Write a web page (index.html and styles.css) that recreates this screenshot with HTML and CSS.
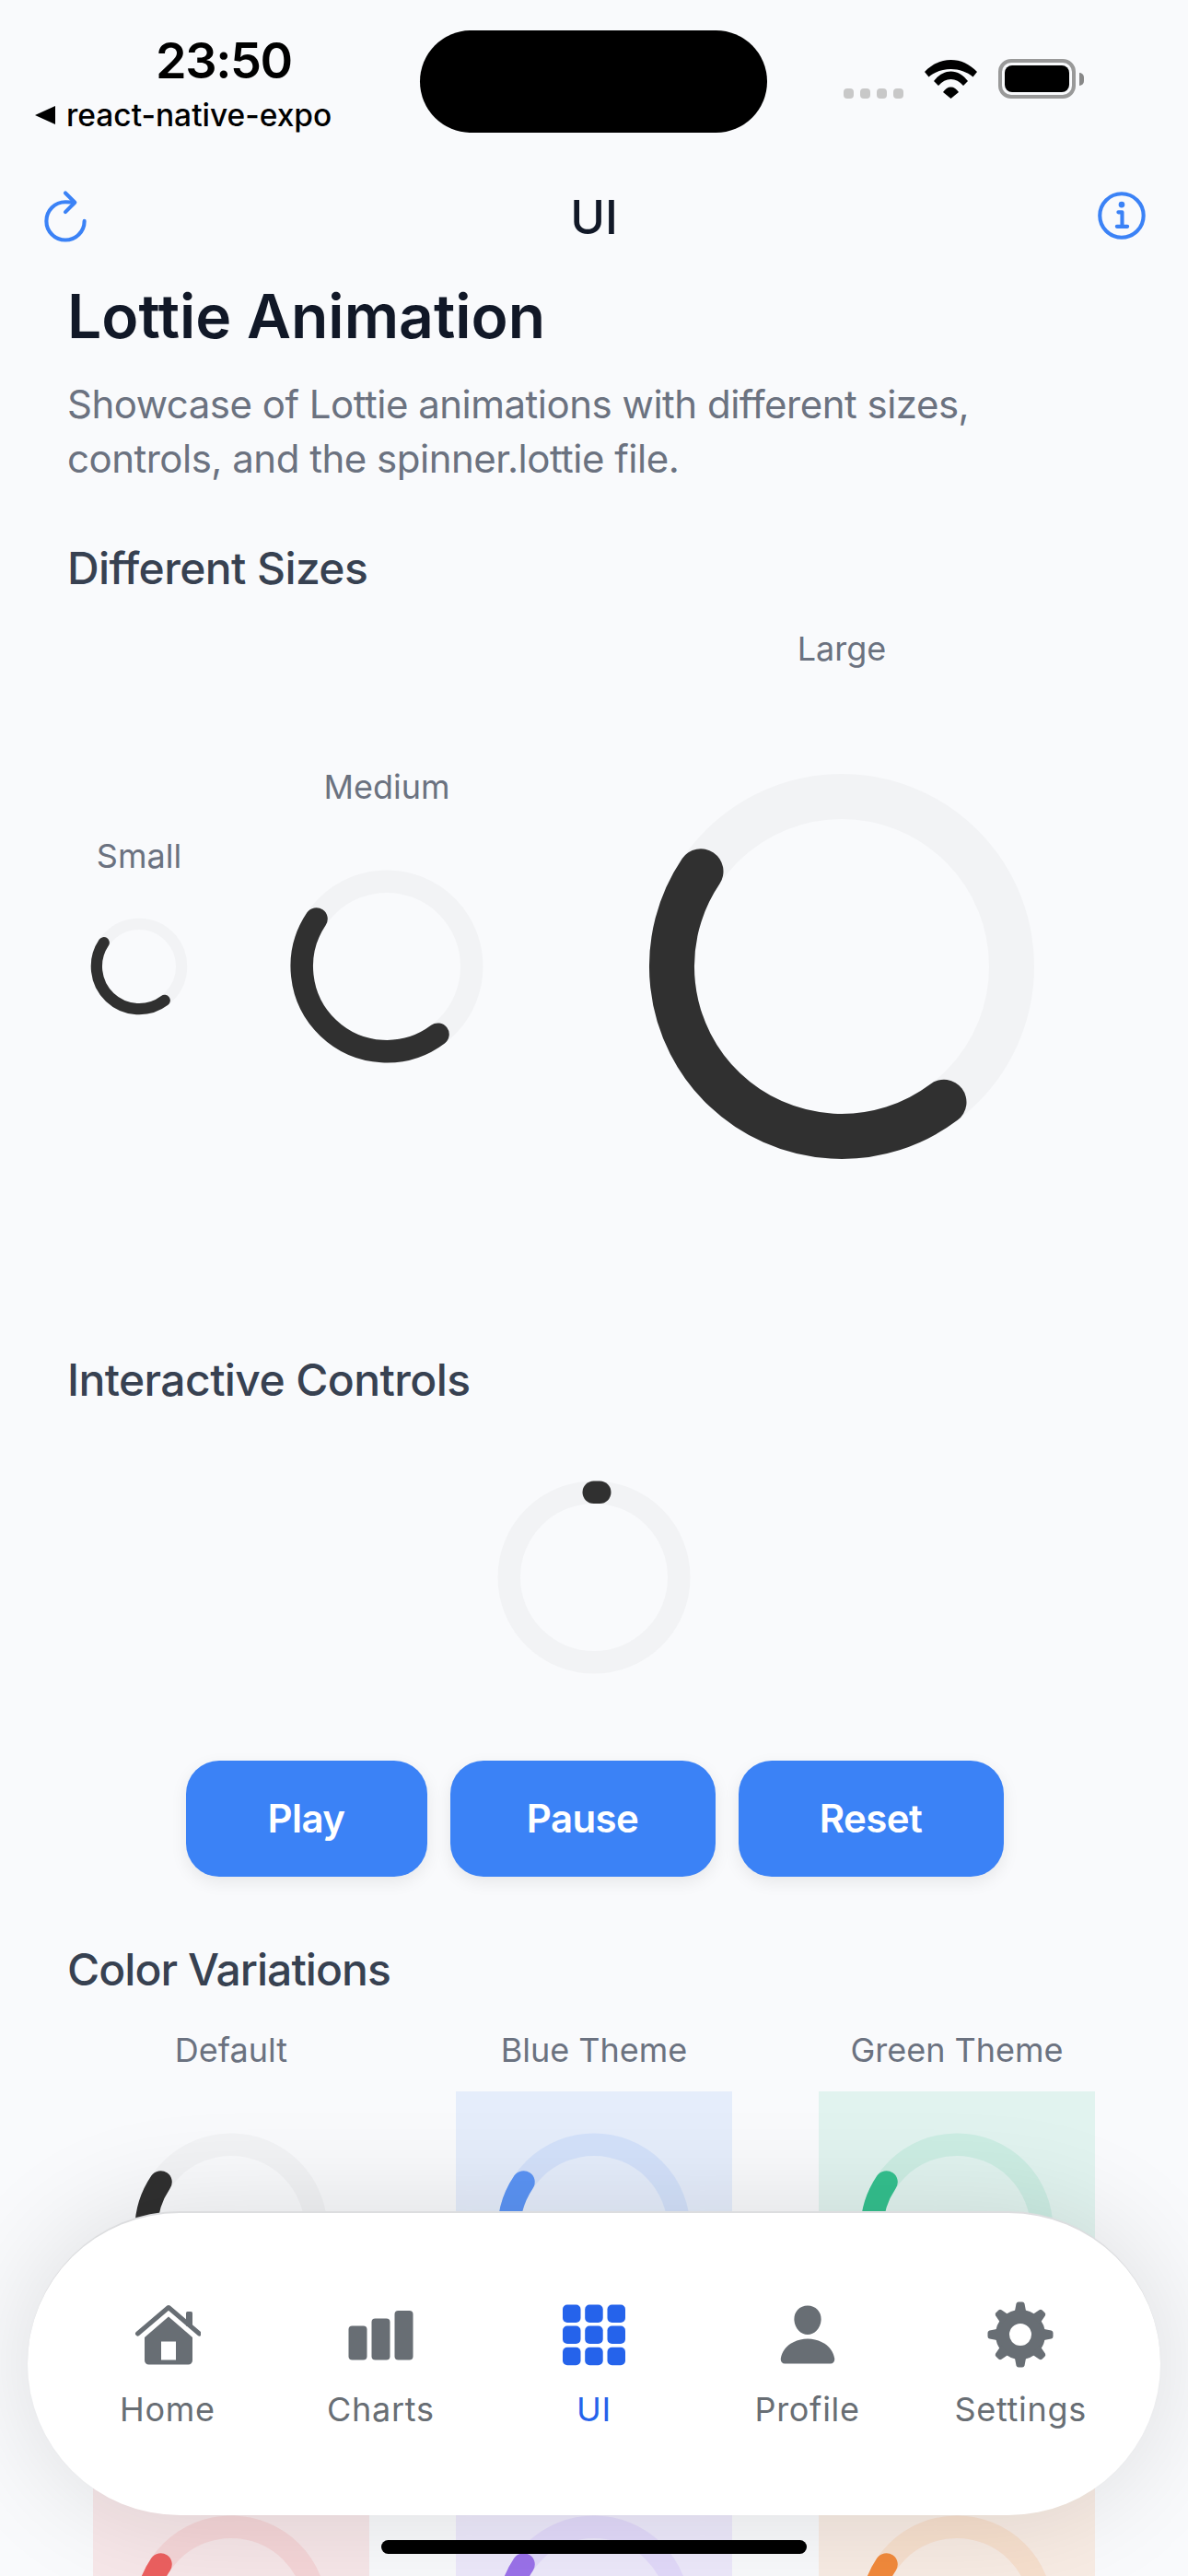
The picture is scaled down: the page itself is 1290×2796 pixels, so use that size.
FILE: index.html
```html
<!DOCTYPE html>
<html lang="en">
<head>
  <meta charset="UTF-8" />
  <title>Lottie Animation</title>
  <meta name="viewport" content="width=device-width, initial-scale=1.0" />
  <link rel="stylesheet" href="styles.css">
</head>
<body>
  <svg class="defs" width="0" height="0">
    <defs>
      <path id="spin-arc" d="M147 196.800A184.500 184.500 0 0 0 411 447.300" />
      <circle id="spin-ring" cx="300" cy="300" r="184.500" />
      <path id="gear-tooth" d="M29.500 13 L31.500 2.500 Q32 .5 34 .5 H38 Q40 .5 40.500 2.500 L42.500 13 Z" />
    </defs>
  </svg>

  <div class="screen">
    <div class="status-bar">
      <div class="status-left">
        <div class="time">23:50</div>
        <div class="back-app"><span class="back-arrow"></span>react-native-expo</div>
      </div>
      <div class="island"></div>
      <div class="status-right">
        <div class="signal"><span></span><span></span><span></span><span></span></div>
        <svg class="wifi" viewBox="0 0 57 42">
          <path d="M0 13C8 4.500 18 0 28.500 0S49 4.500 57 13L52.500 18.500C46 13 37.500 10 28.500 10S11 13 4.500 18.500Z" />
          <path d="M10 23C15 16.500 21.500 12.500 28.500 12.500S42 16.500 47 23L42 28C38 23.500 33.500 21 28.500 21S19 23.500 15 28Z" />
          <path d="M20 35C22.500 31.500 25 29.500 28.500 29.500S34.500 31.500 37 35L28.500 42Z" />
        </svg>
        <div class="battery"><div class="battery-level"></div></div>
        <div class="battery-cap"></div>
      </div>
    </div>

    <header class="nav-header">
      <svg class="nav-icon" viewBox="0 0 512 512">
        <path d="M320 146s24.360-12-64-12a160 160 0 10160 160" />
        <path d="M256 58l80 80-80 80" />
      </svg>
      <div class="nav-title">UI</div>
      <svg class="nav-icon" viewBox="0 0 512 512">
        <path d="M248 64C146.390 64 64 146.390 64 248s82.390 184 184 184 184-82.390 184-184S349.610 64 248 64z" />
        <path d="M220 220h32v116M208 340h88" />
        <circle class="nav-dot" cx="248" cy="156" r="26" />
      </svg>
    </header>

    <main class="content">
      <h1>Lottie Animation</h1>
      <p class="desc">Showcase of Lottie animations with different sizes, controls, and the spinner.lottie file.</p>

      <h2 class="section-sizes">Different Sizes</h2>
      <div class="sizes-row">
        <div class="size-item">
          <div class="caption">Small</div>
          <svg class="lottie lottie-sm" viewBox="0 0 600 600"><use class="ring" href="#spin-ring" /><use class="arc" href="#spin-arc" /></svg>
        </div>
        <div class="size-item">
          <div class="caption">Medium</div>
          <svg class="lottie" viewBox="0 0 600 600"><use class="ring" href="#spin-ring" /><use class="arc" href="#spin-arc" /></svg>
        </div>
        <div class="size-item">
          <div class="caption">Large</div>
          <svg class="lottie lottie-lg" viewBox="0 0 600 600"><use class="ring" href="#spin-ring" /><use class="arc" href="#spin-arc" /></svg>
        </div>
      </div>

      <h2 class="section-controls">Interactive Controls</h2>
      <div class="player">
        <svg class="lottie" viewBox="0 0 600 600"><use class="ring" href="#spin-ring" /><path class="arc" d="M299.500 115.500H312.500" /></svg>
      </div>
      <div class="buttons">
        <button class="btn btn-play">Play</button>
        <button class="btn">Pause</button>
        <button class="btn">Reset</button>
      </div>

      <h2 class="section-colors">Color Variations</h2>
      <div class="color-grid">
        <div class="color-item">
          <div class="caption">Default</div>
          <svg class="lottie" viewBox="0 0 600 600"><use class="ring" href="#spin-ring" /><use class="arc" href="#spin-arc" /></svg>
        </div>
        <div class="color-item">
          <div class="caption">Blue Theme</div>
          <svg class="lottie tint-blue" viewBox="0 0 600 600"><use class="ring" href="#spin-ring" /><use class="arc" href="#spin-arc" /></svg>
        </div>
        <div class="color-item">
          <div class="caption">Green Theme</div>
          <svg class="lottie tint-green" viewBox="0 0 600 600"><use class="ring" href="#spin-ring" /><use class="arc" href="#spin-arc" /></svg>
        </div>
        <!-- captions of this row sit behind the tab bar -->
        <div class="color-item">
          <div class="caption"></div>
          <svg class="lottie tint-red" viewBox="0 0 600 600"><use class="ring" href="#spin-ring" /><use class="arc" href="#spin-arc" /></svg>
        </div>
        <div class="color-item">
          <div class="caption"></div>
          <svg class="lottie tint-purple" viewBox="0 0 600 600"><use class="ring" href="#spin-ring" /><use class="arc" href="#spin-arc" /></svg>
        </div>
        <div class="color-item">
          <div class="caption"></div>
          <svg class="lottie tint-orange" viewBox="0 0 600 600"><use class="ring" href="#spin-ring" /><use class="arc" href="#spin-arc" /></svg>
        </div>
      </div>
    </main>

    <nav class="tab-bar">
      <div class="tab">
        <svg class="tab-icon" viewBox="0 0 72 72">
          <path class="roof" d="M3.500 35 37 6.500 70.500 35" />
          <rect x="56" y="11" width="7" height="16" rx="1.500" />
          <path fill-rule="evenodd" d="M37 16.500 11 39V64a4.500 4.500 0 0 0 4.500 4.500H58.500A4.500 4.500 0 0 0 63 64V39ZM29 43.500H45V63.500H29Z" />
        </svg>
        <span>Home</span>
      </div>
      <div class="tab">
        <svg class="tab-icon" viewBox="0 0 72 72">
          <rect x="1.500" y="26.500" width="20" height="37" rx="4" />
          <rect x="26.500" y="18.500" width="20" height="45" rx="4" />
          <rect x="51.500" y="10" width="20" height="53.500" rx="4" />
        </svg>
        <span>Charts</span>
      </div>
      <div class="tab tab-active">
        <svg class="tab-icon" viewBox="0 0 72 72">
          <rect x="2" y="3.500" width="19.500" height="19.500" rx="5" />
          <rect x="26.200" y="3.500" width="19.500" height="19.500" rx="5" />
          <rect x="50.500" y="3.500" width="19.500" height="19.500" rx="5" />
          <rect x="2" y="26.500" width="19.500" height="19.500" rx="5" />
          <rect x="26.200" y="26.500" width="19.500" height="19.500" rx="5" />
          <rect x="50.500" y="26.500" width="19.500" height="19.500" rx="5" />
          <rect x="2" y="49.700" width="19.500" height="19.500" rx="5" />
          <rect x="26.200" y="49.700" width="19.500" height="19.500" rx="5" />
          <rect x="50.500" y="49.700" width="19.500" height="19.500" rx="5" />
        </svg>
        <span>UI</span>
      </div>
      <div class="tab">
        <svg class="tab-icon" viewBox="0 0 512 512">
          <path d="M332.640 64.580C313.180 43.570 286 32 256 32c-30.160 0-57.430 11.500-76.800 32.380-19.580 21.110-29.120 49.800-26.880 80.780C156.760 206.280 203.270 256 256 256s99.160-49.710 103.670-110.820c2.270-30.700-7.330-59.330-27.030-80.600zM432 480H80a31 31 0 01-24.200-11.130c-6.500-7.770-9.120-18.380-7.180-29.110C57.060 392.940 83.400 353.610 124.800 326c36.780-24.510 83.370-38 131.200-38s94.420 13.500 131.200 38c41.400 27.600 67.740 66.930 76.180 113.750 1.940 10.730-.68 21.340-7.180 29.110A31 31 0 01432 480z" />
        </svg>
        <span>Profile</span>
      </div>
      <div class="tab">
        <svg class="tab-icon" viewBox="0 0 72 72">
          <circle class="gear-ring" cx="36" cy="36" r="19.500" />
          <use href="#gear-tooth" />
          <use href="#gear-tooth" transform="rotate(45 36 36)" />
          <use href="#gear-tooth" transform="rotate(90 36 36)" />
          <use href="#gear-tooth" transform="rotate(135 36 36)" />
          <use href="#gear-tooth" transform="rotate(180 36 36)" />
          <use href="#gear-tooth" transform="rotate(225 36 36)" />
          <use href="#gear-tooth" transform="rotate(270 36 36)" />
          <use href="#gear-tooth" transform="rotate(315 36 36)" />
        </svg>
        <span>Settings</span>
      </div>
    </nav>
    <div class="home-indicator"></div>
  </div>
</body>
</html>
```

FILE: styles.css
```css
* {
  box-sizing: border-box;
}

body {
  margin: 0;
  font-family: Inter, "Noto Sans", sans-serif;
  background-color: #f9fafb;
}

.defs {
  position: absolute;
}

.screen {
  position: relative;
  width: 1290px;
  height: 2796px;
  overflow: hidden;
  background-color: #f9fafc;
}

/* status bar */
.status-bar {
  display: flex;
  height: 202px;
  padding: 33px 0 0 38px;
}

.status-left {
  width: 418px;
}

.time {
  margin: 8px 0 0 131px;
  font-size: 54px;
  line-height: 50px;
  font-weight: 600;
  letter-spacing: -1.4px;
  color: #000;
}

.back-app {
  display: flex;
  align-items: center;
  margin-top: 14px;
  font-size: 33.5px;
  line-height: 40px;
  font-weight: 500;
  color: #000;
}

.back-arrow {
  width: 0;
  height: 0;
  margin-right: 12px;
  border-top: 10.5px solid transparent;
  border-bottom: 10.5px solid transparent;
  border-right: 22px solid #000;
}

.island {
  width: 377px;
  height: 111px;
  border-radius: 56px;
  background-color: #000;
}

.status-right {
  display: flex;
  align-items: flex-end;
  height: 74px;
  padding-left: 83px;
}

.signal {
  display: flex;
  gap: 7px;
}

.signal span {
  width: 11px;
  height: 11px;
  border-radius: 4px;
  background-color: #c8c8c8;
}

.wifi {
  width: 57px;
  height: 42px;
  margin-left: 23px;
  fill: #000;
}

.battery {
  width: 84px;
  height: 43px;
  margin-left: 23px;
  padding: 3px;
  border: 4px solid #999;
  border-radius: 14px;
}

.battery-level {
  height: 100%;
  border-radius: 8px;
  background-color: #000;
}

.battery-cap {
  width: 5px;
  height: 14px;
  margin: 0 0 14px 4px;
  border-radius: 0 5px 5px 0;
  background-color: #888;
}

/* header */
.nav-header {
  display: flex;
  justify-content: space-between;
  align-items: center;
  height: 66px;
  padding: 0 38px;
}

.nav-icon {
  width: 66px;
  height: 66px;
  fill: none;
  stroke: #3b82f6;
  stroke-width: 32;
  stroke-linecap: round;
  stroke-linejoin: round;
}

.nav-dot {
  fill: #3b82f6;
  stroke: none;
}

.nav-title {
  font-size: 51px;
  font-weight: 500;
  color: #111827;
}

/* content */
.content {
  padding: 0 73px;
}

h1 {
  margin: 33px 0 0;
  font-size: 66px;
  line-height: 84px;
  font-weight: 600;
  color: #111827;
}

.desc {
  margin: 24px 0 0;
  font-size: 42px;
  line-height: 59px;
  letter-spacing: -0.5px;
  color: #6b7280;
}

h2 {
  margin: 0;
  font-size: 48px;
  line-height: 66px;
  font-weight: 500;
  letter-spacing: -0.6px;
  color: #374151;
}

.section-sizes {
  margin-top: 57px;
}

.section-controls {
  margin-top: 116px;
}

.section-colors {
  margin-top: 68px;
  letter-spacing: -0.95px;
}

.sizes-row {
  display: flex;
  align-items: center;
  gap: 44px;
  margin-top: 28px;
  padding: 0 3px;
}

.size-item {
  display: flex;
  flex-direction: column;
  align-items: center;
}

.caption {
  min-height: 52px;
  margin-bottom: 19px;
  font-size: 36px;
  line-height: 52px;
  text-align: center;
  color: #6b7280;
}

.lottie {
  display: block;
  width: 300px;
  height: 300px;
}

.lottie-sm {
  width: 150px;
  height: 150px;
}

.lottie-lg {
  width: 600px;
  height: 600px;
}

.ring,
.arc {
  fill: none;
  stroke-width: 49;
  stroke-linecap: round;
}

.ring {
  stroke: #f2f3f5;
}

.arc {
  stroke: #303030;
}

.tint-blue { background-color: rgba(59, 130, 246, 0.1); }
.tint-blue .ring { stroke: rgba(59, 130, 246, 0.1); }
.tint-blue .arc { stroke: #5b94f5; }

.tint-green { background-color: rgba(16, 185, 129, 0.1); }
.tint-green .ring { stroke: rgba(16, 185, 129, 0.1); }
.tint-green .arc { stroke: #34c08e; }

.tint-red { background-color: rgba(239, 68, 68, 0.1); }
.tint-red .ring { stroke: rgba(239, 68, 68, 0.1); }
.tint-red .arc { stroke: #ec6060; }

.tint-purple { background-color: rgba(139, 92, 246, 0.1); }
.tint-purple .ring { stroke: rgba(139, 92, 246, 0.1); }
.tint-purple .arc { stroke: #9b72ea; }

.tint-orange { background-color: rgba(249, 115, 22, 0.1); }
.tint-orange .ring { stroke: rgba(249, 115, 22, 0.1); }
.tint-orange .arc { stroke: #f28a3c; }

.player {
  display: flex;
  justify-content: center;
  margin-top: 31px;
}

.buttons {
  display: flex;
  justify-content: center;
  gap: 25px;
  margin-top: 49px;
  padding-left: 1px;
}

.btn {
  width: 288px;
  height: 126px;
  padding: 0 0 2px;
  border: none;
  border-radius: 36px;
  font-family: inherit;
  font-size: 42px;
  font-weight: 600;
  letter-spacing: -0.6px;
  color: #fff;
  background-color: #3b82f6;
  box-shadow: 0 6px 18px rgba(0, 0, 0, 0.08);
}

.btn-play {
  width: 262px;
}

.color-grid {
  display: grid;
  grid-template-columns: repeat(3, 300px);
  column-gap: 94px;
  row-gap: 44px;
  margin-top: 28px;
  padding: 0 28px;
}

/* tab bar */
.tab-bar {
  position: absolute;
  left: 30px;
  top: 2400px;
  display: flex;
  width: 1230px;
  height: 330px;
  padding: 96px 36px 0;
  border-top: 2px solid #dcdddf;
  border-radius: 165px;
  background-color: #fff;
  box-shadow: 0 0 120px rgba(0, 0, 0, 0.12);
}

.tab {
  display: flex;
  flex-direction: column;
  align-items: center;
  flex: 1;
  font-size: 36px;
  line-height: 44px;
  letter-spacing: 0.7px;
  color: #686e74;
}

.tab-icon {
  width: 72px;
  height: 72px;
  margin-bottom: 23px;
  fill: #686e74;
}

.roof {
  fill: none;
  stroke: #686e74;
  stroke-width: 5;
  stroke-linecap: round;
  stroke-linejoin: round;
}

.gear-ring {
  fill: none;
  stroke: #686e74;
  stroke-width: 15;
}

.tab-active {
  color: #2563eb;
}

.tab-active .tab-icon {
  fill: #2563eb;
}

.home-indicator {
  position: absolute;
  left: 414px;
  top: 2757px;
  width: 462px;
  height: 15px;
  border-radius: 8px;
  background-color: #000;
}
```
